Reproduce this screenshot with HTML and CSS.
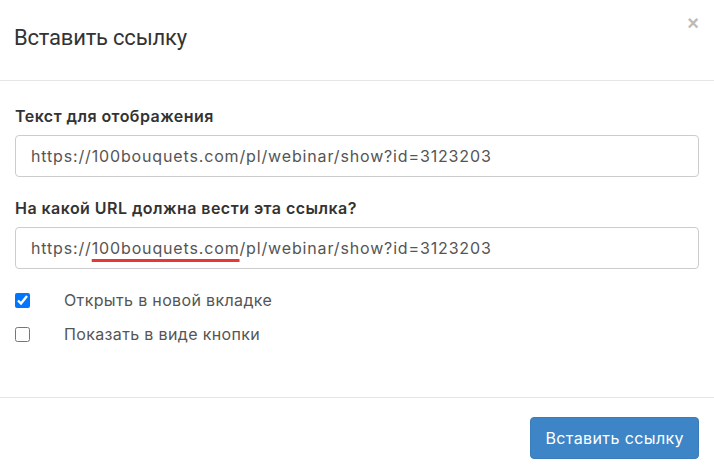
FILE: index.html
```html
<!DOCTYPE html>
<html lang="ru">
<head>
  <meta charset="UTF-8">
  <meta name="viewport" content="width=device-width, initial-scale=1.0">
  <title>Вставить ссылку</title>
  <link rel="stylesheet" href="styles.css">
</head>
<body>
  <div class="modal">
    <div class="modal-header">
      <h4 class="modal-title">Вставить ссылку</h4>
      <button class="close" type="button">&times;</button>
    </div>
    <div class="modal-body">
      <div class="form-group">
        <label for="text">Текст для отображения</label>
        <input type="text" id="text" class="field" value="https://100bouquets.com/pl/webinar/show?id=3123203">
      </div>
      <div class="form-group">
        <label for="url">На какой URL должна вести эта ссылка?</label>
        <div class="field url-field">https://<span class="mark">100bouquets.com</span>/pl/webinar/show?id=3123203</div>
      </div>
      <div class="check">
        <input type="checkbox" id="newtab" checked>
        <label for="newtab">Открыть в новой вкладке</label>
      </div>
      <div class="check">
        <input type="checkbox" id="asbutton">
        <label for="asbutton">Показать в виде кнопки</label>
      </div>
    </div>
    <div class="modal-footer">
      <button class="btn-primary" type="button">Вставить ссылку</button>
    </div>
  </div>
</body>
</html>
```

FILE: styles.css
```css
body {
  margin: 0;
  font-family: Inter, "Noto Sans", sans-serif;
  color: #333;
  background: #fff;
}
.modal {
  width: 714px;
  height: 470px;
}
.modal-header {
  height: 81px;
  box-sizing: border-box;
  border-bottom: 1px solid #e5e5e5;
  padding: 0 15px 0 14px;
  display: flex;
  align-items: flex-start;
  justify-content: space-between;
}
.modal-title {
  margin: 25px 0 0;
  font-family: Roboto, "Liberation Sans", sans-serif;
  font-weight: 400;
  font-size: 22px;
  letter-spacing: -0.2px;
  color: #333;
}
.close {
  margin-top: 12px;
  padding: 0;
  border: none;
  background: none;
  font-family: "Liberation Sans", sans-serif;
  font-size: 20px;
  font-weight: 700;
  color: #bbb;
  cursor: pointer;
}
.modal-body {
  padding: 26px 15px 0;
  height: 317px;
  box-sizing: border-box;
  border-bottom: 1px solid #e5e5e5;
}
.form-group {
  margin-bottom: 22px;
}
.form-group + .form-group {
  margin-bottom: 14px;
}
.form-group label {
  display: block;
  font-weight: 600;
  font-size: 16px;
  line-height: 19px;
  letter-spacing: 0.45px;
  margin-bottom: 9px;
  color: #333;
}
.field {
  display: block;
  width: 100%;
  height: 42px;
  box-sizing: border-box;
  padding: 0 15px;
  border: 1px solid #ccc;
  border-radius: 4px;
  font-family: Inter, "Noto Sans", sans-serif;
  font-size: 16px;
  letter-spacing: 0.85px;
  color: #555;
  line-height: 40px;
}
.mark {
  text-decoration: underline;
  text-decoration-color: #e53935;
  text-decoration-thickness: 3px;
  text-underline-offset: 5px;
}
.check {
  display: flex;
  align-items: center;
  height: 34px;
}
.check input {
  margin: 0 34px 0 0;
  width: 15px;
  height: 15px;
}
.check label {
  font-size: 16px;
  letter-spacing: 0.35px;
  color: #555;
}
.modal-footer {
  display: flex;
  justify-content: flex-end;
  padding: 19px 15px;
}
.btn-primary {
  height: 42px;
  padding: 0 14px;
  background-color: #3d85c6;
  border: 1px solid #3a7dba;
  border-radius: 4px;
  color: #fff;
  font-family: Inter, "Noto Sans", sans-serif;
  font-size: 16px;
  letter-spacing: 0.4px;
  cursor: pointer;
}
```
